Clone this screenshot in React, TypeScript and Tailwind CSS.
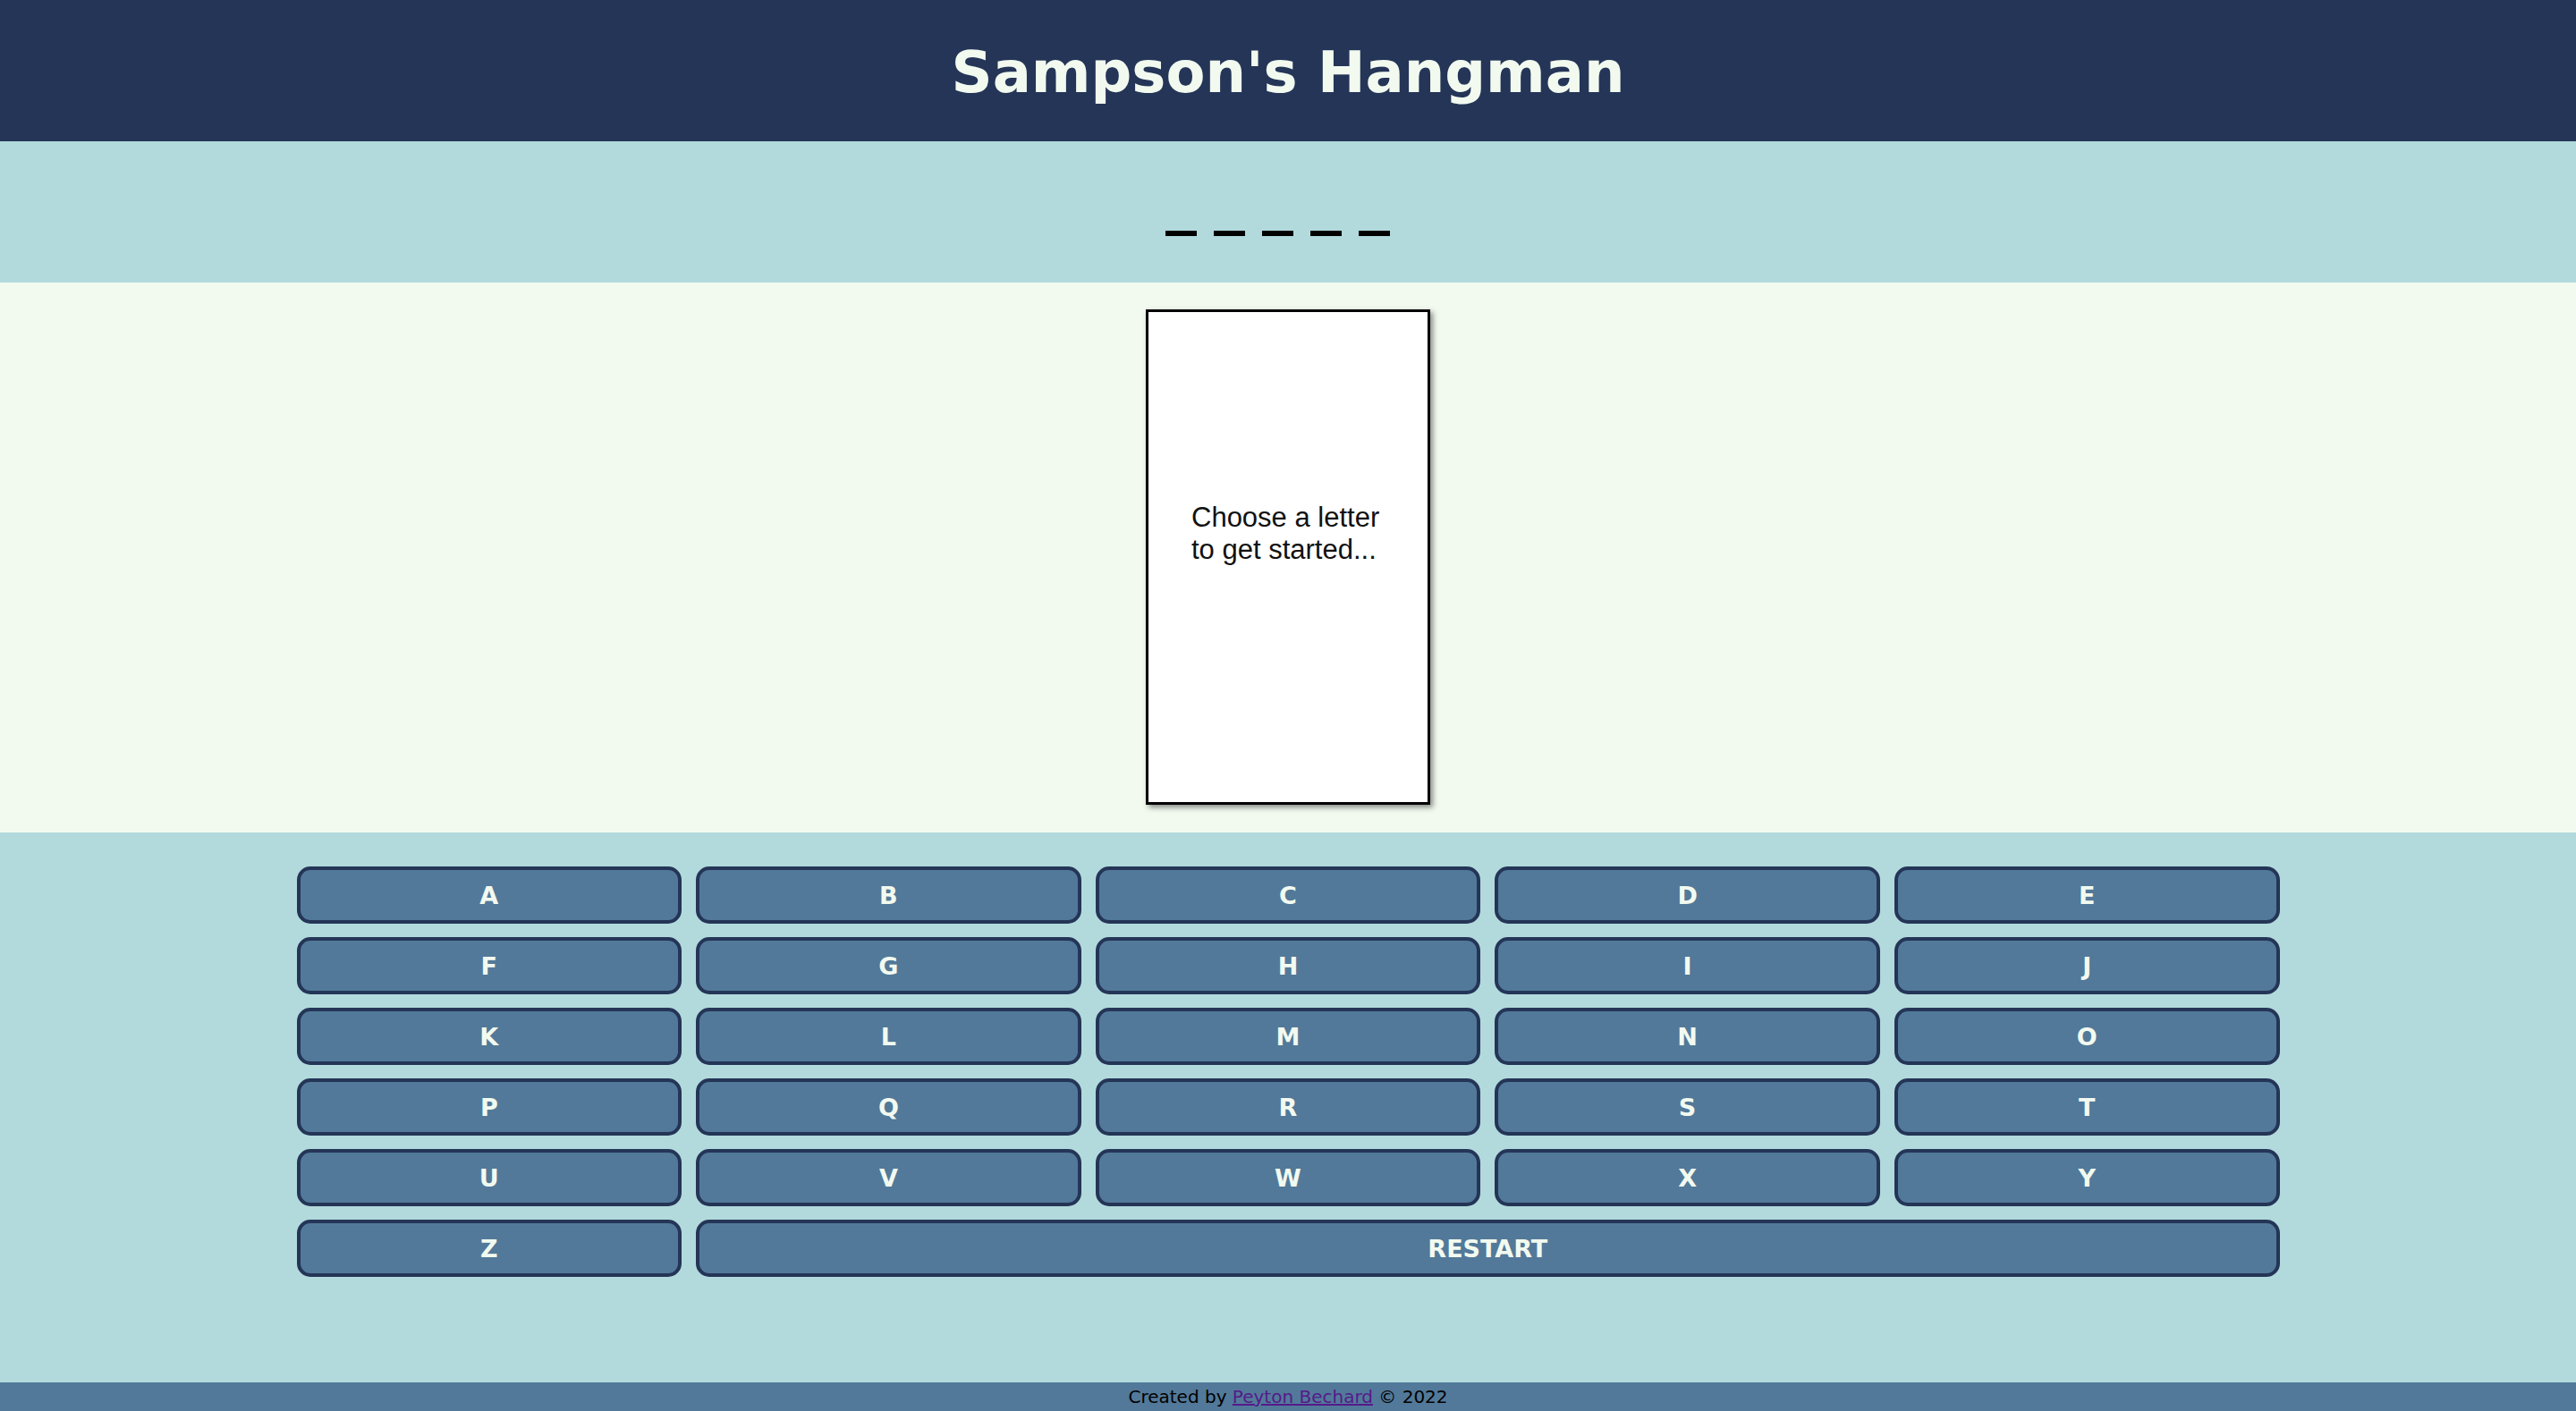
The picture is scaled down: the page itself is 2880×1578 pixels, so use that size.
import React from "react";

const letters = "ABCDEFGHIJKLMNOPQRSTUVWXYZ".split("");

const btn =
  "h-[64px] rounded-[15px] border-4 border-[#243557] bg-[#527999] text-[#f2faf0] font-bold text-[27px] flex items-center justify-center pt-[2px] [font-family:'DejaVu_Sans',Verdana,sans-serif]";

export default function App() {
  return (
    <div className="flex h-[1578px] w-full flex-col [font-family:'DejaVu_Sans',Verdana,sans-serif]">
      <header className="flex h-[158px] shrink-0 items-center justify-center bg-[#243557] pt-[3px]">
        <h1 className="text-[64px] font-bold leading-none text-[#f2faf0]">Sampson's Hangman</h1>
      </header>

      <section className="flex h-[158px] shrink-0 items-start justify-center bg-[#b2dadc] pt-[100px]">
        <div className="mr-[24px] flex gap-[19px]" aria-label="_ _ _ _ _">
          {[0, 1, 2, 3, 4].map((i) => (
            <span key={i} className="block h-[6px] w-[35px] bg-black" />
          ))}
        </div>
      </section>

      <section className="flex h-[615px] shrink-0 justify-center bg-[#f2faf0] pt-[30px]">
        <div className="h-[554px] w-[318px] border-[3px] border-black bg-white shadow-[3px_3px_6px_rgba(0,0,0,0.45)]">
          <div className="flex justify-center pt-[212px]">
            <p className="w-[216px] text-left text-[31px] leading-[36px] text-[#111] [font-family:'Liberation_Sans',Arial,sans-serif]">
              Choose a letter to get started...
            </p>
          </div>
        </div>
      </section>

      <section className="flex-1 bg-[#b2dadc] pt-[38px]">
        <div className="mx-auto grid w-[2217px] grid-cols-5 gap-x-[16px] gap-y-[15px]">
          {letters.map((l) => (
            <button key={l} className={btn}>
              {l}
            </button>
          ))}
          <button className={btn + " col-span-4"}>RESTART</button>
        </div>
      </section>

      <footer className="flex h-[32px] shrink-0 items-center justify-center bg-[#527999] text-[20px] leading-none text-black">
        <span>
          Created by{" "}
          <a href="#" className="text-[#551a8b] underline">
            Peyton Bechard
          </a>{" "}
          © 2022
        </span>
      </footer>
    </div>
  );
}
